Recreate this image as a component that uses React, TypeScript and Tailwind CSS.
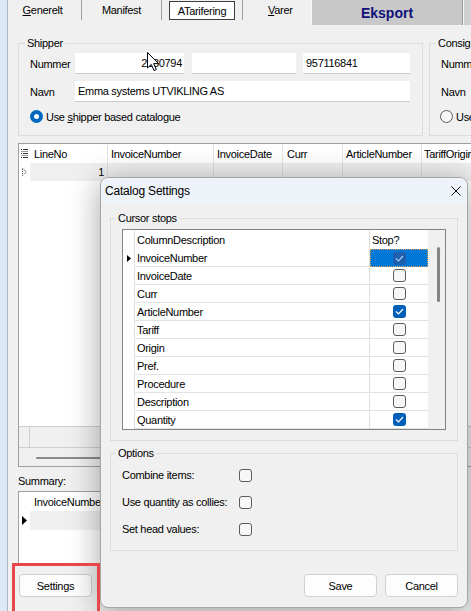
import React from 'react';

function CheckMark({ color }: { color: string }) {
  return (
    <svg width="9" height="7" viewBox="0 0 9 7">
      <path d="M1 3.5 L3.5 6 L8 1" fill="none" stroke={color} strokeWidth="1.2" />
    </svg>
  );
}

function Box({ state }: { state: 'off' | 'on' | 'sel' }) {
  if (state === 'sel')
    return (
      <div className="w-[13px] h-[13px] rounded-[3px] bg-[#1b5fae] flex items-center justify-center">
        <CheckMark color="#a8cdf3" />
      </div>
    );
  if (state === 'on')
    return (
      <div className="w-[13px] h-[13px] rounded-[3px] bg-[#005fb8] flex items-center justify-center">
        <CheckMark color="#ffffff" />
      </div>
    );
  return <div className="w-[13px] h-[13px] rounded-[3px] border border-[#5c5c5c] bg-[#f7f7f7]" />;
}

function Field({ w, children, right }: { w: string; children?: React.ReactNode; right?: boolean }) {
  return (
    <div
      className={
        'h-[21px] bg-white border-b border-[#c9c9c9] flex items-center ' +
        (right ? 'justify-end pr-[2px] ' : 'pl-[3px] ') +
        w
      }
    >
      {children}
    </div>
  );
}

const rows: [string, 'off' | 'on' | 'sel'][] = [
  ['InvoiceNumber', 'sel'],
  ['InvoiceDate', 'off'],
  ['Curr', 'off'],
  ['ArticleNumber', 'on'],
  ['Tariff', 'off'],
  ['Origin', 'off'],
  ['Pref.', 'off'],
  ['Procedure', 'off'],
  ['Description', 'off'],
  ['Quantity', 'on'],
];

export default function App() {
  return (
    <div className="relative w-[471px] h-[611px] overflow-hidden bg-[#f0f0f0] flex text-[11px] leading-[14px] tracking-[-0.3px] text-black font-['Liberation_Sans',Arial,sans-serif]">
      <div className="w-[8px] shrink-0 bg-[#dce8f5] border-r border-[#a9b6c4]" />
      <div className="flex-1 min-w-0 flex flex-col">
        {/* Tabs */}
        <div className="h-[25px] flex items-start shrink-0">
          <div className="w-[74px] h-[20px] border-r border-[#a0a0a0] flex items-center justify-center pr-[4px]">
            <span><u>G</u>enerelt</span>
          </div>
          <div className="w-[80px] h-[20px] border-r border-[#a0a0a0] flex items-center justify-center">
            <span>Manifest</span>
          </div>
          <div className="w-[81px] h-[20px] border-r border-[#a0a0a0] pl-[7px] pt-[1px]">
            <div className="w-[66px] h-[19px] border border-[#3c3c3c] bg-white flex items-center justify-center">
              <span>ATarifering</span>
            </div>
          </div>
          <div className="w-[68px] h-[20px] flex items-center pl-[25px]">
            <span><u>V</u>arer</span>
          </div>
          <div className="w-[152px] h-[25px] bg-[#c8c8c8] border-l border-[#fafafa] border-r border-r-[#9a9a9a] flex items-center justify-center">
            <span className="text-[14px] font-bold tracking-normal text-[#10107a]">Eksport</span>
          </div>
          <div className="flex-1 h-[25px] bg-[#d0d0d0] border-l border-[#f4f4f4]" />
        </div>

        {/* Groups */}
        <div className="mt-[11px] ml-[10px] flex gap-[6px] items-start shrink-0">
          <fieldset className="w-[405px] h-[100px] border border-[#dcdcdc] pl-[6px] shrink-0">
            <legend className="px-[2px] leading-[14px]">Shipper</legend>
            <div className="pl-[5px] pt-[3px]">
              <div className="flex items-center h-[21px]">
                <span className="w-[45px]">Nummer</span>
                <Field w="w-[109px]" right>2130794</Field>
                <div className="w-[8px]" />
                <Field w="w-[104px]" />
                <div className="w-[7px]" />
                <Field w="w-[107px]">957116841</Field>
              </div>
              <div className="flex items-center h-[21px] mt-[7px]">
                <span className="w-[45px]">Navn</span>
                <Field w="w-[335px]">Emma systems UTVIKLING AS</Field>
              </div>
              <div className="flex items-center h-[13px] mt-[8px] gap-[3px]">
                <div className="w-[13px] h-[13px] rounded-full bg-[#0067c0] flex items-center justify-center">
                  <div className="w-[5px] h-[5px] rounded-full bg-white" />
                </div>
                <span>Use <u>s</u>hipper based catalogue</span>
              </div>
            </div>
          </fieldset>
          <fieldset className="w-[200px] h-[100px] border border-[#dcdcdc] pl-[6px] shrink-0">
            <legend className="px-[2px] leading-[14px]">Consignee</legend>
            <div className="pl-[5px] pt-[3px]">
              <div className="flex items-center h-[21px]">
                <span className="w-[45px]">Nummer</span>
              </div>
              <div className="flex items-center h-[21px] mt-[7px]">
                <span className="w-[45px]">Navn</span>
              </div>
              <div className="flex items-center h-[13px] mt-[8px] gap-[3px]">
                <div className="w-[13px] h-[13px] rounded-full border border-[#5c5c5c] bg-[#f7f7f7] -ml-[1px]" />
                <span>Use consignee based catalogue</span>
              </div>
            </div>
          </fieldset>
        </div>

        {/* Main grid */}
        <div className="mt-[7px] ml-[10px] w-[460px] h-[324px] shrink-0 border border-[#a0a0a0] bg-white flex flex-col">
          <div className="h-[19px] flex bg-white shrink-0">
            <div className="w-[11px] flex items-center justify-center">
              <svg width="7" height="9" viewBox="0 0 7 9">
                <rect x="0" y="0" width="1" height="1" fill="#333" />
                <rect x="2" y="0" width="5" height="1" fill="#333" />
                <rect x="0" y="4" width="1" height="1" fill="#333" />
                <rect x="2" y="4" width="5" height="1" fill="#333" />
                <rect x="0" y="8" width="1" height="1" fill="#333" />
                <rect x="2" y="8" width="5" height="1" fill="#333" />
                <rect x="0" y="2" width="7" height="1" fill="#999" />
                <rect x="0" y="6" width="7" height="1" fill="#999" />
              </svg>
            </div>
            <div className="w-[78px] border-r border-[#e3e3e3] pl-[4px] flex items-center">LineNo</div>
            <div className="w-[106px] border-r border-[#e3e3e3] pl-[3px] flex items-center">InvoiceNumber</div>
            <div className="w-[69px] border-r border-[#e3e3e3] pl-[3px] flex items-center">InvoiceDate</div>
            <div className="w-[60px] border-r border-[#e3e3e3] pl-[4px] flex items-center">Curr</div>
            <div className="w-[79px] border-r border-[#e3e3e3] pl-[3px] flex items-center">ArticleNumber</div>
            <div className="flex-1 pl-[2px] flex items-center">TariffOrigin</div>
          </div>
          <div className="h-[18px] flex shrink-0">
            <div className="w-[11px] flex items-center justify-center bg-white">
              <svg width="5" height="8" viewBox="0 0 5 8">
                <path d="M0.5 0.5 L4.5 4 L0.5 7.5 Z" fill="none" stroke="#333" strokeWidth="1" strokeDasharray="1 1" />
              </svg>
            </div>
            <div className="w-[78px] bg-[#f0f0f0] border-r border-[#dcdcdc] pr-[3px] flex items-center justify-end">1</div>
            <div className="w-[106px] bg-[#f0f0f0] border-r border-[#dcdcdc]" />
            <div className="w-[69px] bg-[#f0f0f0] border-r border-[#dcdcdc]" />
            <div className="w-[60px] bg-[#f0f0f0] border-r border-[#dcdcdc]" />
            <div className="w-[79px] bg-[#f0f0f0] border-r border-[#dcdcdc]" />
            <div className="flex-1 bg-[#f0f0f0]" />
          </div>
          <div className="flex-1 bg-white" />
          <div className="h-[21px] flex bg-[#f0f0f0] border-t border-[#cfcfcf] shrink-0">
            <div className="w-[11px] border-r border-[#cfcfcf]" />
          </div>
          <div className="h-[19px] bg-[#f0f0f0] border-t border-[#cfcfcf] pl-[17px] pt-[9px] shrink-0">
            <div className="w-[200px] h-[2px] bg-[#8a8a8a] rounded-full" />
          </div>
        </div>

        {/* Summary */}
        <div className="mt-[7px] ml-[10px] h-[14px] shrink-0">Summary:</div>
        <div className="mt-[3px] ml-[10px] w-[300px] h-[75px] shrink-0 border border-[#a0a0a0] bg-white flex flex-col">
          <div className="h-[19px] flex">
            <div className="w-[11px]" />
            <div className="w-[200px] border-r border-[#e3e3e3] pl-[4px] flex items-center">InvoiceNumber</div>
          </div>
          <div className="h-[19px] flex">
            <div className="w-[11px] bg-white flex items-center justify-center">
              <svg width="5" height="9" viewBox="0 0 5 9">
                <path d="M0 0 L5 4.5 L0 9 Z" fill="#000" />
              </svg>
            </div>
            <div className="flex-1 bg-[#f0f0f0]" />
          </div>
        </div>
        <div className="mt-[8px] ml-[11px] w-[73px] h-[23px] shrink-0 rounded-[4px] border border-[#cfcfcf] bg-[#fdfdfd] flex items-center justify-center">
          Settings
        </div>
      </div>

      {/* Mouse cursor */}
      <svg className="absolute left-[147px] top-[52px]" width="13" height="20" viewBox="0 0 13 20">
        <path d="M0.5 0.5 L0.5 16 L4.3 12.4 L7 18.5 L9.3 17.5 L6.7 11.6 L11.5 11.6 Z" fill="#fff" stroke="#000" strokeWidth="1" strokeLinejoin="round" />
      </svg>

      {/* Dialog */}
      <div className="absolute left-[100px] top-[177px] w-[368px] h-[431px] rounded-[8px] border border-[#a6a6a6] bg-[#f0f0f0] overflow-hidden flex flex-col shadow-[0_4px_32px_rgba(0,0,0,0.36)]">
        <div className="h-[25px] shrink-0 bg-[#eef2f9] flex items-center justify-between pl-[4px]">
          <span className="text-[12px] tracking-[-0.2px]">Catalog Settings</span>
          <svg className="mr-[6px]" width="10" height="10" viewBox="0 0 10 10">
            <path d="M0.5 0.5 L9.5 9.5 M9.5 0.5 L0.5 9.5" stroke="#111" strokeWidth="1" />
          </svg>
        </div>
        <div className="flex-1 flex flex-col px-[9px] pt-[8px] pb-[10px]">
          <fieldset className="h-[230px] border border-[#dcdcdc] pl-[5px] shrink-0">
            <legend className="px-[2px] leading-[14px]">Cursor stops</legend>
            <div className="ml-[6px] mt-[4px] w-[324px] h-[201px] border border-[#838383] bg-white flex">
              <div className="w-[305px] flex flex-col">
                <div className="h-[19px] flex shrink-0">
                  <div className="w-[12px] border-r border-[#dedede]" />
                  <div className="w-[235px] border-r border-[#dedede] pl-[2px] flex items-center">ColumnDescription</div>
                  <div className="flex-1 pl-[2px] flex items-center">Stop?</div>
                </div>
                {rows.map(([name, st], i) => (
                  <div key={name} className="h-[18px] flex shrink-0">
                    <div className="w-[12px] border-r border-[#dedede] flex items-center justify-center">
                      {i === 0 && (
                        <svg width="4" height="7" viewBox="0 0 4 7">
                          <path d="M0 0 L4 3.5 L0 7 Z" fill="#000" />
                        </svg>
                      )}
                    </div>
                    <div className="w-[235px] border-r border-[#dedede] border-b border-b-[#e3e3e3] pl-[2px] flex items-center">
                      {name}
                    </div>
                    <div
                      className={
                        'flex-1 flex items-center justify-center ' +
                        (st === 'sel'
                          ? 'bg-[#0078d7] border border-dotted border-[#d9a05a]'
                          : 'border-b border-[#e3e3e3]')
                      }
                    >
                      <Box state={st} />
                    </div>
                  </div>
                ))}
              </div>
              <div className="flex-1 bg-[#f0f0f0] pt-[17px] pl-[9px]">
                <div className="w-[3px] h-[55px] rounded-full bg-[#858585]" />
              </div>
            </div>
          </fieldset>
          <fieldset className="mt-[5px] h-[105px] border border-[#dcdcdc] pl-[5px] shrink-0">
            <legend className="px-[2px] leading-[14px]">Options</legend>
            <div className="ml-[6px] mt-[8px] flex flex-col gap-[13px]">
              {['Combine items:', 'Use quantity as collies:', 'Set head values:'].map((t) => (
                <div key={t} className="h-[14px] flex items-center">
                  <span className="w-[117px]">{t}</span>
                  <Box state="off" />
                </div>
              ))}
            </div>
          </fieldset>
          <div className="mt-auto flex justify-end gap-[8px]">
            <div className="w-[73px] h-[23px] rounded-[4px] border border-[#d0d0d0] bg-[#fdfdfd] flex items-center justify-center">
              Save
            </div>
            <div className="w-[73px] h-[23px] rounded-[4px] border border-[#d0d0d0] bg-[#fdfdfd] flex items-center justify-center">
              Cancel
            </div>
          </div>
        </div>
      </div>

      {/* Red annotation */}
      <div className="absolute left-[12px] top-[563px] w-[88px] h-[52px] border-[3px] border-[#e8464b]" />
    </div>
  );
}
